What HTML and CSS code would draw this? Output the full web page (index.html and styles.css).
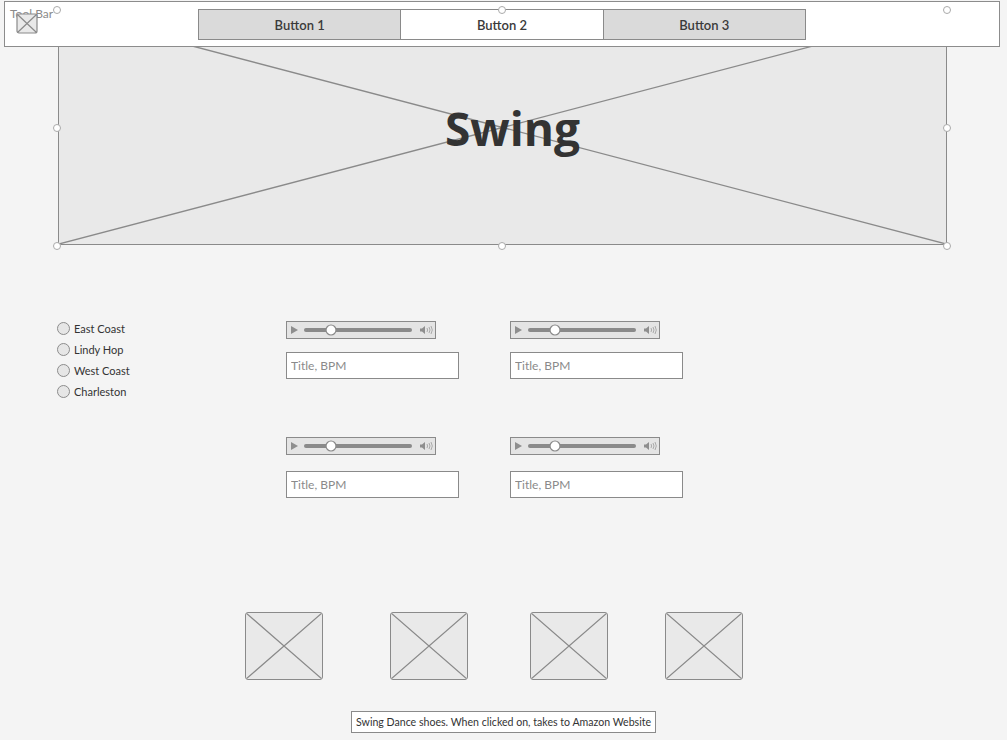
FILE: index.html
```html
<!DOCTYPE html>
<html lang="en">
<head>
  <meta charset="UTF-8">
  <meta name="viewport" content="width=device-width, initial-scale=1.0">
  <title>Swing</title>
  <link rel="stylesheet" href="styles.css">
</head>
<body>
  <div class="toolbar">
    <span class="toolbar-label">Tool Bar</span>
    <svg class="toolbar-icon" width="22" height="21" viewBox="0 0 22 21">
      <rect x="1" y="1" width="20" height="19" rx="2" fill="#e9e9e9" stroke="#8a8a8a" stroke-width="1.2"/>
      <path d="M1.5 1.5 L20.5 19.5 M20.5 1.5 L1.5 19.5" stroke="#8a8a8a" stroke-width="1.2"/>
    </svg>
    <div class="button-group">
      <button class="tab">Button 1</button>
      <button class="tab active">Button 2</button>
      <button class="tab">Button 3</button>
    </div>
  </div>

  <div class="hero">
    <svg class="cross" viewBox="0 0 100 100" preserveAspectRatio="none">
      <path d="M0 0 L100 100 M100 0 L0 100" stroke="#8a8a8a" stroke-width="1.3" vector-effect="non-scaling-stroke"/>
    </svg>
    <h1>Swing</h1>
    <span class="handle tl"></span>
    <span class="handle tc"></span>
    <span class="handle tr"></span>
    <span class="handle ml"></span>
    <span class="handle mr"></span>
    <span class="handle bl"></span>
    <span class="handle bc"></span>
    <span class="handle br"></span>
  </div>

  <div class="content">
    <div class="styles">
      <label class="radio"><span class="dot"></span>East Coast</label>
      <label class="radio"><span class="dot"></span>Lindy Hop</label>
      <label class="radio"><span class="dot"></span>West Coast</label>
      <label class="radio"><span class="dot"></span>Charleston</label>
    </div>
    <div class="tracks" id="tracks"></div>
  </div>

  <div class="shoes">
    <div class="thumb"><svg class="cross" viewBox="0 0 100 100" preserveAspectRatio="none"><path d="M0 0 L100 100 M100 0 L0 100" stroke="#8a8a8a" stroke-width="1.3" vector-effect="non-scaling-stroke"/></svg></div>
    <div class="thumb"><svg class="cross" viewBox="0 0 100 100" preserveAspectRatio="none"><path d="M0 0 L100 100 M100 0 L0 100" stroke="#8a8a8a" stroke-width="1.3" vector-effect="non-scaling-stroke"/></svg></div>
    <div class="thumb"><svg class="cross" viewBox="0 0 100 100" preserveAspectRatio="none"><path d="M0 0 L100 100 M100 0 L0 100" stroke="#8a8a8a" stroke-width="1.3" vector-effect="non-scaling-stroke"/></svg></div>
    <div class="thumb"><svg class="cross" viewBox="0 0 100 100" preserveAspectRatio="none"><path d="M0 0 L100 100 M100 0 L0 100" stroke="#8a8a8a" stroke-width="1.3" vector-effect="non-scaling-stroke"/></svg></div>
  </div>

  <div class="caption">Swing Dance shoes. When clicked on, takes to Amazon Website</div>

  <script>
    // four players, each with a title field under it
    const tracks = document.getElementById('tracks');
    for (let i = 0; i < 4; i++) {
      const cell = document.createElement('div');
      cell.className = 'track';
      cell.innerHTML =
        '<div class="player"><svg width="148" height="16" viewBox="0 0 148 16">' +
        '<polygon points="4,4 11,8 4,12" fill="#8e8e8e"/>' +
        '<line x1="19" y1="8" x2="123" y2="8" stroke="#8a8a8a" stroke-width="4" stroke-linecap="round"/>' +
        '<circle cx="44" cy="8" r="5" fill="#fff" stroke="#8a8a8a" stroke-width="1.2"/>' +
        '<path d="M133 6.5 h2 l3 -2.5 v8 l-3 -2.5 h-2 z" fill="#8e8e8e"/>' +
        '<path d="M140 6 q1.2 2 0 4 M142 5 q2 3 0 6 M144 4 q2.6 4 0 8" stroke="#9a9a9a" stroke-width="0.8" fill="none"/>' +
        '</svg></div>' +
        '<input class="title" type="text" placeholder="Title, BPM">';
      tracks.appendChild(cell);
    }
  </script>
</body>
</html>
```

FILE: styles.css
```css
body {
  font-family: Lato, 'Open Sans', 'Liberation Sans', sans-serif;
  background: #f4f4f4;
  color: #333;
  margin: 0;
  padding: 0;
  min-height: 740px;
}
.toolbar {
  position: absolute;
  left: 4px;
  top: 1px;
  width: 996px;
  height: 46px;
  box-sizing: border-box;
  border: 1px solid #8c8c8c;
  background: #fff;
  z-index: 2;
}
.toolbar-label {
  position: absolute;
  left: 5px;
  top: 4px;
  font-size: 12px;
  color: #8a8a8a;
}
.toolbar-icon {
  position: absolute;
  left: 11px;
  top: 11px;
}
.button-group {
  display: flex;
  width: 608px;
  height: 31px;
  box-sizing: border-box;
  margin: 7px 0 0 193px;
  border: 1px solid #8a8a8a;
}
.tab {
  flex: 1;
  border: none;
  background: #dadada;
  font-family: inherit;
  font-size: 13px;
  font-weight: 600;
  color: #3a3a3a;
  padding: 0;
}
.tab + .tab {
  border-left: 1px solid #8a8a8a;
}
.tab.active {
  background: #fff;
}
.hero {
  position: relative;
  margin: 10px 0 0 58px;
  width: 889px;
  height: 235px;
  box-sizing: border-box;
  border: 1px solid #8a8a8a;
  background: #e9e9e9;
  display: flex;
  align-items: center;
  justify-content: center;
}
.cross {
  position: absolute;
  left: 0;
  top: 0;
  width: 100%;
  height: 100%;
}
.hero h1 {
  position: relative;
  margin: 0 0 0 20px;
  font-family: 'Open Sans', sans-serif;
  font-size: 46px;
  font-weight: 700;
  color: #333;
}
.handle {
  position: absolute;
  width: 6px;
  height: 6px;
  border-radius: 50%;
  background: #fff;
  border: 1px solid #aaa;
  z-index: 3;
}
.handle.tl { left: -6px; top: -5px; }
.handle.tc { left: 439px; top: -5px; }
.handle.tr { right: -5px; top: -5px; }
.handle.ml { left: -6px; top: 113px; }
.handle.mr { right: -5px; top: 113px; }
.handle.bl { left: -6px; bottom: -6px; }
.handle.bc { left: 439px; bottom: -6px; }
.handle.br { right: -5px; bottom: -6px; }
.content {
  display: flex;
  margin-top: 73px;
  padding-left: 57px;
}
.styles {
  width: 229px;
}
.radio {
  display: flex;
  align-items: center;
  height: 21px;
  font-size: 11px;
  color: #333;
}
.dot {
  width: 11px;
  height: 11px;
  border-radius: 50%;
  background: #e6e6e6;
  border: 1px solid #8c8c8c;
  margin-right: 4px;
}
.tracks {
  display: grid;
  grid-template-columns: 173px 173px;
  column-gap: 51px;
  row-gap: 58px;
  padding-top: 3px;
}
.player {
  width: 150px;
  height: 18px;
  box-sizing: border-box;
  border: 1px solid #8a8a8a;
  background: #e4e4e4;
}
.player svg {
  display: block;
}
.title {
  display: block;
  width: 173px;
  height: 27px;
  box-sizing: border-box;
  margin-top: 13px;
  border: 1px solid #8a8a8a;
  background: #fff;
  font-family: inherit;
  font-size: 12px;
  padding: 0 4px;
  outline: none;
}
.track:nth-child(n+3) .title {
  margin-top: 16px;
}
.title::placeholder {
  color: #8a8a8a;
}
.shoes {
  display: grid;
  grid-template-columns: 145px 140px 135px 78px;
  margin-top: 114px;
  padding-left: 245px;
}
.thumb {
  position: relative;
  width: 78px;
  height: 68px;
  box-sizing: border-box;
  border: 1px solid #8a8a8a;
  border-radius: 3px;
  background: #e9e9e9;
  overflow: hidden;
}
.caption {
  display: inline-block;
  margin: 31px 0 0 351px;
  border: 1px solid #8a8a8a;
  background: #fff;
  font-size: 10.6px;
  color: #333;
  padding: 4px 4px;
  white-space: nowrap;
}
```
